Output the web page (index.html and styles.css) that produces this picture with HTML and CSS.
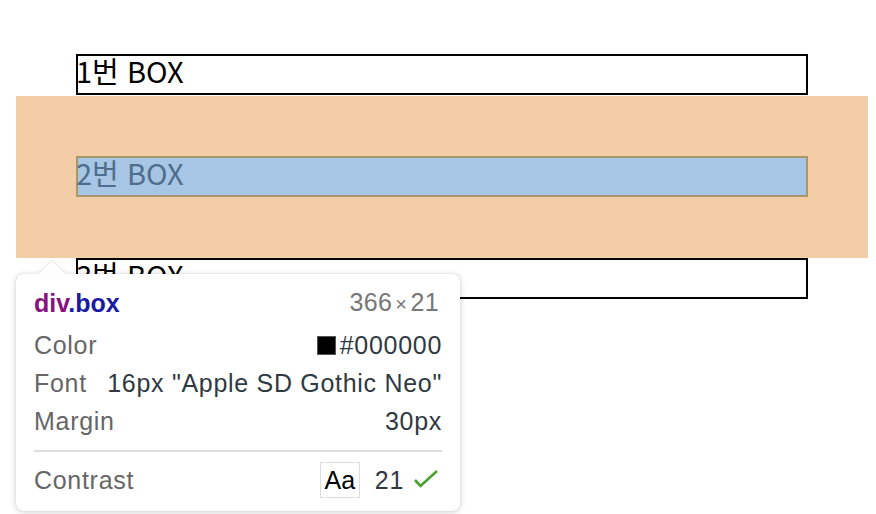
FILE: index.html
```html
<!DOCTYPE html>
<html lang="ko">
<head>
<meta charset="utf-8">
<title>Box inspector</title>
<link rel="stylesheet" href="styles.css">
</head>
<body>
<div class="stage">
  <div class="box box-plain">1번 BOX</div>
  <div class="margin-hl">
    <div class="box box-hl">2번 BOX</div>
  </div>
  <div class="box box-plain">3번 BOX</div>

  <div class="tip">
    <div class="tip-arrow"></div>
    <div class="tip-row tip-title">
      <span class="sel"><span class="tag">div</span><span class="cls">.box</span></span>
      <span class="dims">366<span class="times">×</span>21</span>
    </div>
    <div class="tip-row">
      <span class="label">Color</span>
      <span class="value"><span class="swatch"></span>#000000</span>
    </div>
    <div class="tip-row">
      <span class="label">Font</span>
      <span class="value">16px "Apple SD Gothic Neo"</span>
    </div>
    <div class="tip-row">
      <span class="label">Margin</span>
      <span class="value">30px</span>
    </div>
    <div class="tip-sep"></div>
    <div class="tip-row">
      <span class="label">Contrast</span>
      <span class="value contrast">
        <span class="aa">Aa</span>
        <span class="ratio">21</span>
        <svg class="check" width="24" height="18" viewBox="0 0 24 18"><polyline points="1,10 6.5,16 23,1" fill="none" stroke="#4b9f2f" stroke-width="2.6"/></svg>
      </span>
    </div>
  </div>
</div>
</body>
</html>
```

FILE: styles.css
```css
html, body {
  margin: 0;
  padding: 0;
  background: #ffffff;
}

.stage {
  position: relative;
  width: 876px;
  height: 514px;
  padding-top: 54px;
  box-sizing: border-box;
  overflow: hidden;
  font-family: "Noto Sans CJK KR", "Noto Sans", sans-serif;
}

.box {
  box-sizing: border-box;
  width: 732px;
  height: 41px;
  border: 2px solid #000;
  font-size: 29px;
  line-height: 28px;
  padding: 0 0 9px 0;
  text-indent: -2px;
  white-space: nowrap;
}

.box-plain {
  margin-left: 76px;
  color: #000;
}

.box-plain:first-child {
  margin-bottom: 1px;
}

.margin-hl {
  box-sizing: border-box;
  width: 852px;
  margin-left: 16px;
  padding: 60px 60px 61px;
  background: #f3cda5;
}

.box-hl {
  background: #a7c5e4;
  border-color: #a8976b;
  color: #4f6d8c;
}

/* tooltip overlay */
.tip {
  position: absolute;
  left: 16px;
  top: 274px;
  width: 444px;
  height: 237px;
  box-sizing: border-box;
  padding: 10px 18px 0;
  background: #fff;
  border-radius: 7px;
  box-shadow: 0 0 1px rgba(0,0,0,0.25), 0 1px 6px rgba(0,0,0,0.18);
  font-family: "Liberation Sans", Arial, sans-serif;
  font-size: 25px;
  letter-spacing: 0.7px;
  color: #303942;
}

.tip-arrow {
  position: absolute;
  left: 22px;
  top: -13px;
  width: 0;
  height: 0;
  border-left: 14px solid transparent;
  border-right: 14px solid transparent;
  border-bottom: 13px solid #fff;
  filter: drop-shadow(0 -1px 1px rgba(0,0,0,0.12));
}

.tip-row {
  display: flex;
  justify-content: space-between;
  align-items: center;
  height: 38px;
  line-height: 38px;
  white-space: nowrap;
}

.tip-title {
  margin-bottom: 4px;
}

.sel {
  font-weight: bold;
  letter-spacing: 0;
}

.tag {
  color: #881280;
}

.cls {
  color: #1a1aa6;
}

.dims {
  color: #777;
  margin-right: 3px;
  letter-spacing: 0.4px;
}

.times {
  font-size: 20px;
  margin: 0 3px;
}

.label {
  color: #666;
}

.value {
  display: flex;
  align-items: center;
  color: #303942;
}

.swatch {
  display: inline-block;
  width: 17px;
  height: 17px;
  background: #000;
  border: 1px solid #555;
  margin-right: 4px;
}

.tip-sep {
  height: 2px;
  background: #dddddd;
  margin: 10px 0 9px;
}

.aa {
  box-sizing: border-box;
  width: 40px;
  height: 36px;
  line-height: 34px;
  border: 1px solid #dcdcdc;
  text-align: center;
  color: #000;
  letter-spacing: 0;
  margin-right: 15px;
}

.ratio {
  margin-right: 10px;
}

.check {
  display: block;
  margin-right: 4px;
  margin-top: -2px;
}
```
